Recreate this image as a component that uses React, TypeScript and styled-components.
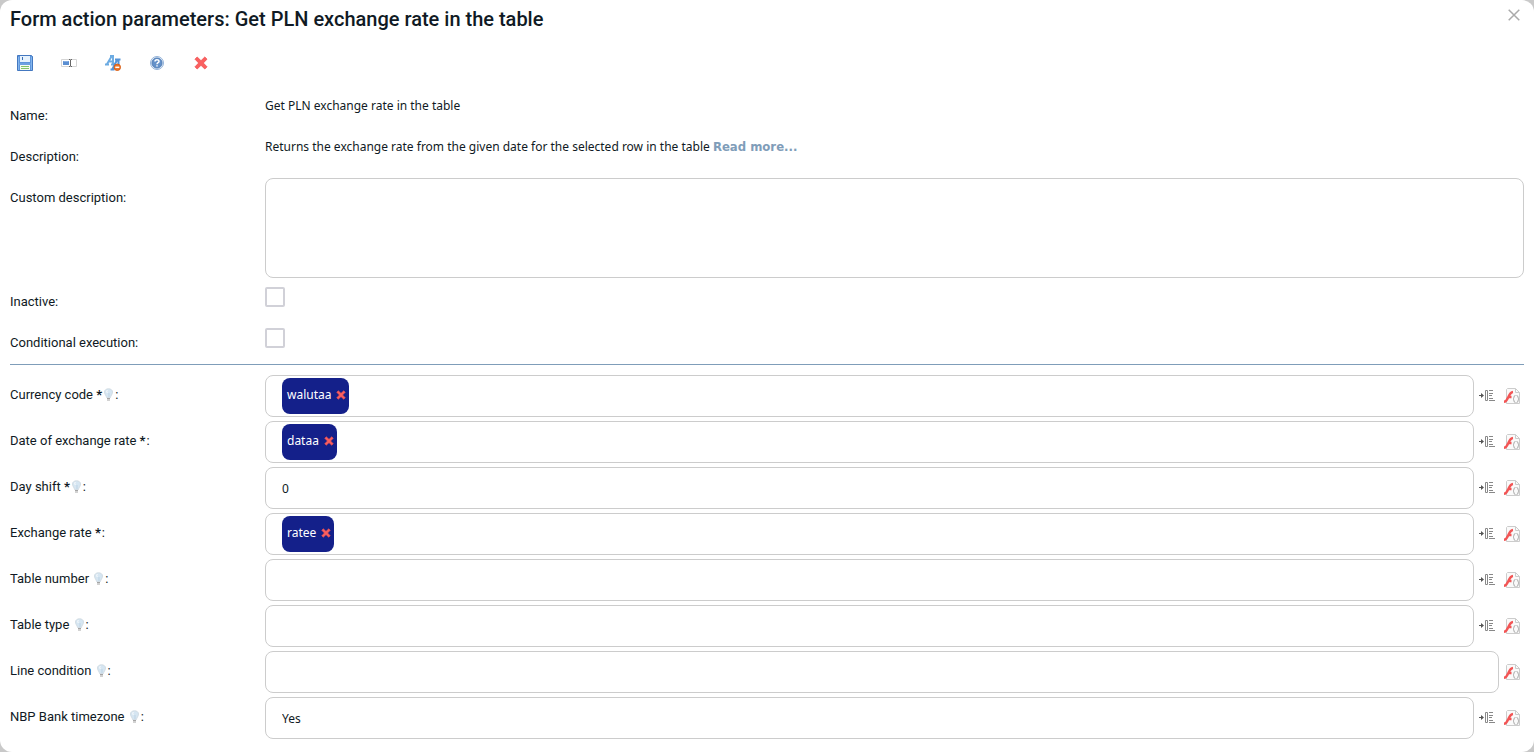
import React from "react";
import styled, { createGlobalStyle } from "styled-components";

const labelFont = `Roboto, "Noto Sans", sans-serif`;
const valueFont = `"Noto Sans", "DejaVu Sans", sans-serif`;

const GlobalStyle = createGlobalStyle`
  * { box-sizing: border-box; }
  body { margin: 0; background: #c9c9c9; color: #101a24; font: 12px/20px ${valueFont}; }
  button, input, textarea { font: inherit; color: inherit; }
`;

const Dialog = styled.main`
  min-height: 100vh;
  padding: 0 10px 13px;
  background: #fff;
  border-radius: 12px;
`;
const Header = styled.header`
  display: flex;
  justify-content: space-between;
  align-items: flex-start;
  height: 50px;
`;
const Title = styled.h1`
  margin: 0;
  padding-top: 7px;
  font: 500 20px/24px ${labelFont};
`;
const IconButton = styled.button`
  display: block;
  flex: none;
  padding: 0;
  border: 0;
  background: none;
  line-height: 0;
  cursor: pointer;
`;
const CloseButton = styled(IconButton)`
  padding: 9px 4px;
`;
const Toolbar = styled.div`
  display: flex;
  align-items: flex-start;
  gap: 28px;
  height: 45px;
  padding: 5px 7px 0;
`;
const Row = styled.div`
  display: grid;
  grid-template-columns: 255px minmax(0, 1fr);
`;
const InfoRow = styled(Row)`
  min-height: 41px;
  padding-bottom: 3px;
`;
const labelStyle = `
  font-family: ${labelFont};
  font-size: 13px;
  line-height: 20px;
`;
const InfoLabel = styled.label`
  ${labelStyle}
  padding-top: 11px;
`;
const InfoTerm = styled.div`
  ${labelStyle}
  padding-top: 11px;
`;
const InfoValue = styled.div`
  padding-top: 1px;
`;
const ReadMore = styled.a`
  color: #7f9db9;
  font-family: "DejaVu Sans Condensed", "DejaVu Sans", sans-serif;
  font-size: 13px;
  font-weight: bold;
  font-stretch: condensed;
  line-height: 16px;
  text-decoration: none;
`;
const TextArea = styled.textarea`
  display: block;
  width: 100%;
  height: 100px;
  margin-top: 1px;
  padding: 8px 16px;
  border: 1px solid #ccc;
  border-radius: 8px;
  resize: none;
`;
const CheckBox = styled.input`
  appearance: none;
  display: block;
  width: 20px;
  height: 20px;
  margin: 6px 0 0;
  border: 2px solid #d1d1d8;
  border-radius: 2px;
  background: #fff;
  &:checked { background: #14208a; }
`;
const Divider = styled.hr`
  height: 1px;
  margin: 1px 0 10px;
  border: 0;
  background: #7f9db9;
`;
const Fields = styled.div`
  display: grid;
  gap: 4px;
`;
const FieldLabel = styled.label`
  ${labelStyle}
  display: flex;
  align-items: center;
  gap: 1px;
  height: 40px;
  white-space: pre;
`;
const Control = styled.div`
  display: flex;
  align-items: center;
`;
const Box = styled.div`
  display: flex;
  flex: 1;
  align-items: center;
  min-width: 0;
  height: 42px;
  margin-right: 5px;
  padding: 0 16px;
  border: 1px solid #ccc;
  border-radius: 8px;
`;
const Input = styled.input`
  flex: 1;
  min-width: 0;
  height: 38px;
  padding: 0;
  border: 0;
  outline: 0;
  background: none;
`;
const Chip = styled.span`
  display: flex;
  align-items: center;
  gap: 5px;
  height: 36px;
  padding: 0 3px 2px 5px;
  border-radius: 8px;
  background: #14208a;
  color: #fff;
`;
const Actions = styled.div`
  display: flex;
  gap: 9px;
  padding-right: 4px;
`;

const Close = () => (
  <svg width="12" height="12" viewBox="0 0 12 12"><path d="M.7.7l10.6 10.6M11.3.7L.7 11.3" stroke="#aaa" strokeWidth="1.5" /></svg>
);
const Save = () => (
  <svg width="16" height="16" viewBox="0 0 16 16">
    <path d="M.5.5h14l1 1v14H.5z" fill="#5d95dc" stroke="#4478c0" />
    <path d="M1.5 2v13M14.5 2v13" stroke="#83b5ed" />
    <path d="M3 1h10v6H3z" fill="#e6f2fd" /><path d="M5 2h1v3H5z" fill="#3c6eb5" />
    <path d="M2 8h12v2H2z" fill="#6da0e0" />
    <path d="M3 10h10v5H3z" fill="#f5fbef" /><path d="M4 11.5h8M4 13.5h8" stroke="#82c46a" />
  </svg>
);
const FieldIcon = () => (
  <svg width="16" height="16" viewBox="0 0 16 16">
    <path d="M.5 4.500h15v7H.5z" fill="#fff" stroke="#d5d5d5" />
    <path d="M2 6h6v4H2z" fill="#5b8ed1" /><path d="M2.500 6.500h5" stroke="#86aee2" />
    <path d="M8 4.500h1l.5.5.5-.5h1M9.500 5v6M8 11.500h1l.5-.5.5.5h1" stroke="#666" fill="none" />
  </svg>
);
const Letters = () => (
  <svg width="16" height="16" viewBox="0 0 16 16" fill="none">
    <path d="M0 9.500h4M2 9L6.500 1.500M5 1h4M8 1v8M4 6.500h4M6 9.500h4" stroke="#6cabe2" strokeWidth="1.900" />
    <path d="M5.500 14.500h4M7.500 14L12 5M10 4.500h5.500M13.500 5v9M9.500 10.500h5" stroke="#5594d8" strokeWidth="2" />
    <circle cx="12.300" cy="12.300" r="3.200" fill="#ed7427" stroke="#d65f18" /><path d="M10.300 12.300h4" stroke="#fff" strokeWidth="1.500" />
  </svg>
);
const Help = () => (
  <svg width="16" height="16" viewBox="0 0 16 16" fill="none">
    <circle cx="8" cy="8" r="6.500" fill="#e4edf7" stroke="#94b3d9" />
    <circle cx="8" cy="8" r="5" fill="#6491c9" stroke="#5480b8" />
    <path d="M6 6.500C6 4.200 10 4.200 10 6.400 10 7.700 8 7.600 8 9.200M8 10.300v1.300" stroke="#fff" strokeWidth="1.500" />
  </svg>
);
const Cross = ({ size = 16, pad = 1 }: { size?: number; pad?: number }) => (
  <svg width={size} height={size} viewBox={`${-pad} ${-pad} ${14 + pad * 2} ${14 + pad * 2}`}>
    <path d="M1 3.200L3.200 1 7 4.700 10.800 1 13 3.200 9.300 7 13 10.800 10.800 13 7 9.300 3.200 13 1 10.800 4.700 7z" fill="#fa6060" stroke="#f04c4c" strokeWidth=".8" />
  </svg>
);
const Bulb = () => (
  <svg width="11" height="16" viewBox="0 0 11 16" aria-hidden="true">
    <path d="M3.500 10.500C3.500 8.500 1.500 7.700 1.500 5 1.500 .7 9.500 .7 9.500 5c0 2.700-2 3.500-2 5.500z" fill="#d6e6f2" stroke="#d3dde4" />
    <path d="M4.500 3c-1 1-1 2 0 3" stroke="#fff" fill="none" /><path d="M6 6v4" stroke="#bdd3e4" />
    <path d="M4 11.500h3M4 13h3" stroke="#a5a5a5" />
  </svg>
);
const Insert = () => (
  <svg width="16" height="16" viewBox="0 0 16 16" fill="none">
    <path d="M0 7.500h4" stroke="#555" /><path d="M2 5l3 2.500L2 10z" fill="#555" />
    <path d="M6.500 2.500h2v10h-2z" stroke="#888" />
    <path d="M10 2.500h4M10 5.500h4M10 7.500h3M10 10.500h4M10 12.500h6" stroke="#888" />
  </svg>
);
const Script = () => (
  <svg width="16" height="16" viewBox="0 0 16 16" fill="none">
    <path d="M2.500 15.500v-14l1-1h8l4 4v11z" fill="#fafafa" stroke="#ccc" /><path d="M11.500.5v4h4" stroke="#ccc" />
    <path d="M0 13.800C4.500 13.500 4 4.500 9 4M3.500 9h4" stroke="#f25555" strokeWidth="2.400" />
    <path d="M11.500 7.500q-1.500 0-1.500 1.500t-1 2q1 .5 1 2t1.500 1.500M12.500 7.500q1.500 0 1.500 1.500t1 2q-1 .5-1 2t-1.500 1.500" stroke="#aaa" />
  </svg>
);

type Field = { id: string; label: string; required?: boolean; hint?: boolean; chip?: string; value?: string; scriptOnly?: boolean };
const fields: Field[] = [
  { id: "currency", label: "Currency code ", required: true, hint: true, chip: "walutaa" },
  { id: "date", label: "Date of exchange rate ", required: true, chip: "dataa" },
  { id: "shift", label: "Day shift ", required: true, hint: true, value: "0" },
  { id: "rate", label: "Exchange rate ", required: true, chip: "ratee" },
  { id: "number", label: "Table number ", hint: true },
  { id: "type", label: "Table type ", hint: true },
  { id: "condition", label: "Line condition ", hint: true, scriptOnly: true },
  { id: "timezone", label: "NBP Bank timezone ", hint: true, value: "Yes" },
];
const tools = [
  { name: "Save", icon: <Save /> },
  { name: "Rename", icon: <FieldIcon /> },
  { name: "Remove translation", icon: <Letters /> },
  { name: "Help", icon: <Help /> },
  { name: "Delete", icon: <Cross /> },
];

export default function App() {
  return (
    <>
      <GlobalStyle />
      <Dialog>
        <Header>
          <Title>Form action parameters: Get PLN exchange rate in the table</Title>
          <CloseButton aria-label="Close"><Close /></CloseButton>
        </Header>
        <Toolbar>
          {tools.map((t) => <IconButton key={t.name} aria-label={t.name}>{t.icon}</IconButton>)}
        </Toolbar>
        <InfoRow>
          <InfoTerm>Name:</InfoTerm>
          <InfoValue>Get PLN exchange rate in the table</InfoValue>
        </InfoRow>
        <InfoRow>
          <InfoTerm>Description:</InfoTerm>
          <InfoValue>Returns the exchange rate from the given date for the selected row in the table <ReadMore href="#more">Read more...</ReadMore></InfoValue>
        </InfoRow>
        <InfoRow>
          <InfoLabel htmlFor="custom">Custom description:</InfoLabel>
          <TextArea id="custom" />
        </InfoRow>
        <InfoRow>
          <InfoLabel htmlFor="inactive">Inactive:</InfoLabel>
          <CheckBox id="inactive" type="checkbox" />
        </InfoRow>
        <InfoRow>
          <InfoLabel htmlFor="conditional">Conditional execution:</InfoLabel>
          <CheckBox id="conditional" type="checkbox" />
        </InfoRow>
        <Divider />
        <Fields>
          {fields.map((f) => (
            <Row key={f.id}>
              <FieldLabel htmlFor={f.id}>
                <span>{f.label}{f.required && <b>*</b>}</span>{f.hint && <Bulb />}:
              </FieldLabel>
              <Control>
                <Box>
                  {f.chip && (
                    <Chip>{f.chip}<IconButton aria-label={`Remove ${f.chip}`}><Cross size={10} pad={0} /></IconButton></Chip>
                  )}
                  <Input id={f.id} type="text" defaultValue={f.value} />
                </Box>
                <Actions>
                  {!f.scriptOnly && <IconButton aria-label="Insert variable"><Insert /></IconButton>}
                  <IconButton aria-label="Edit script"><Script /></IconButton>
                </Actions>
              </Control>
            </Row>
          ))}
        </Fields>
      </Dialog>
    </>
  );
}
